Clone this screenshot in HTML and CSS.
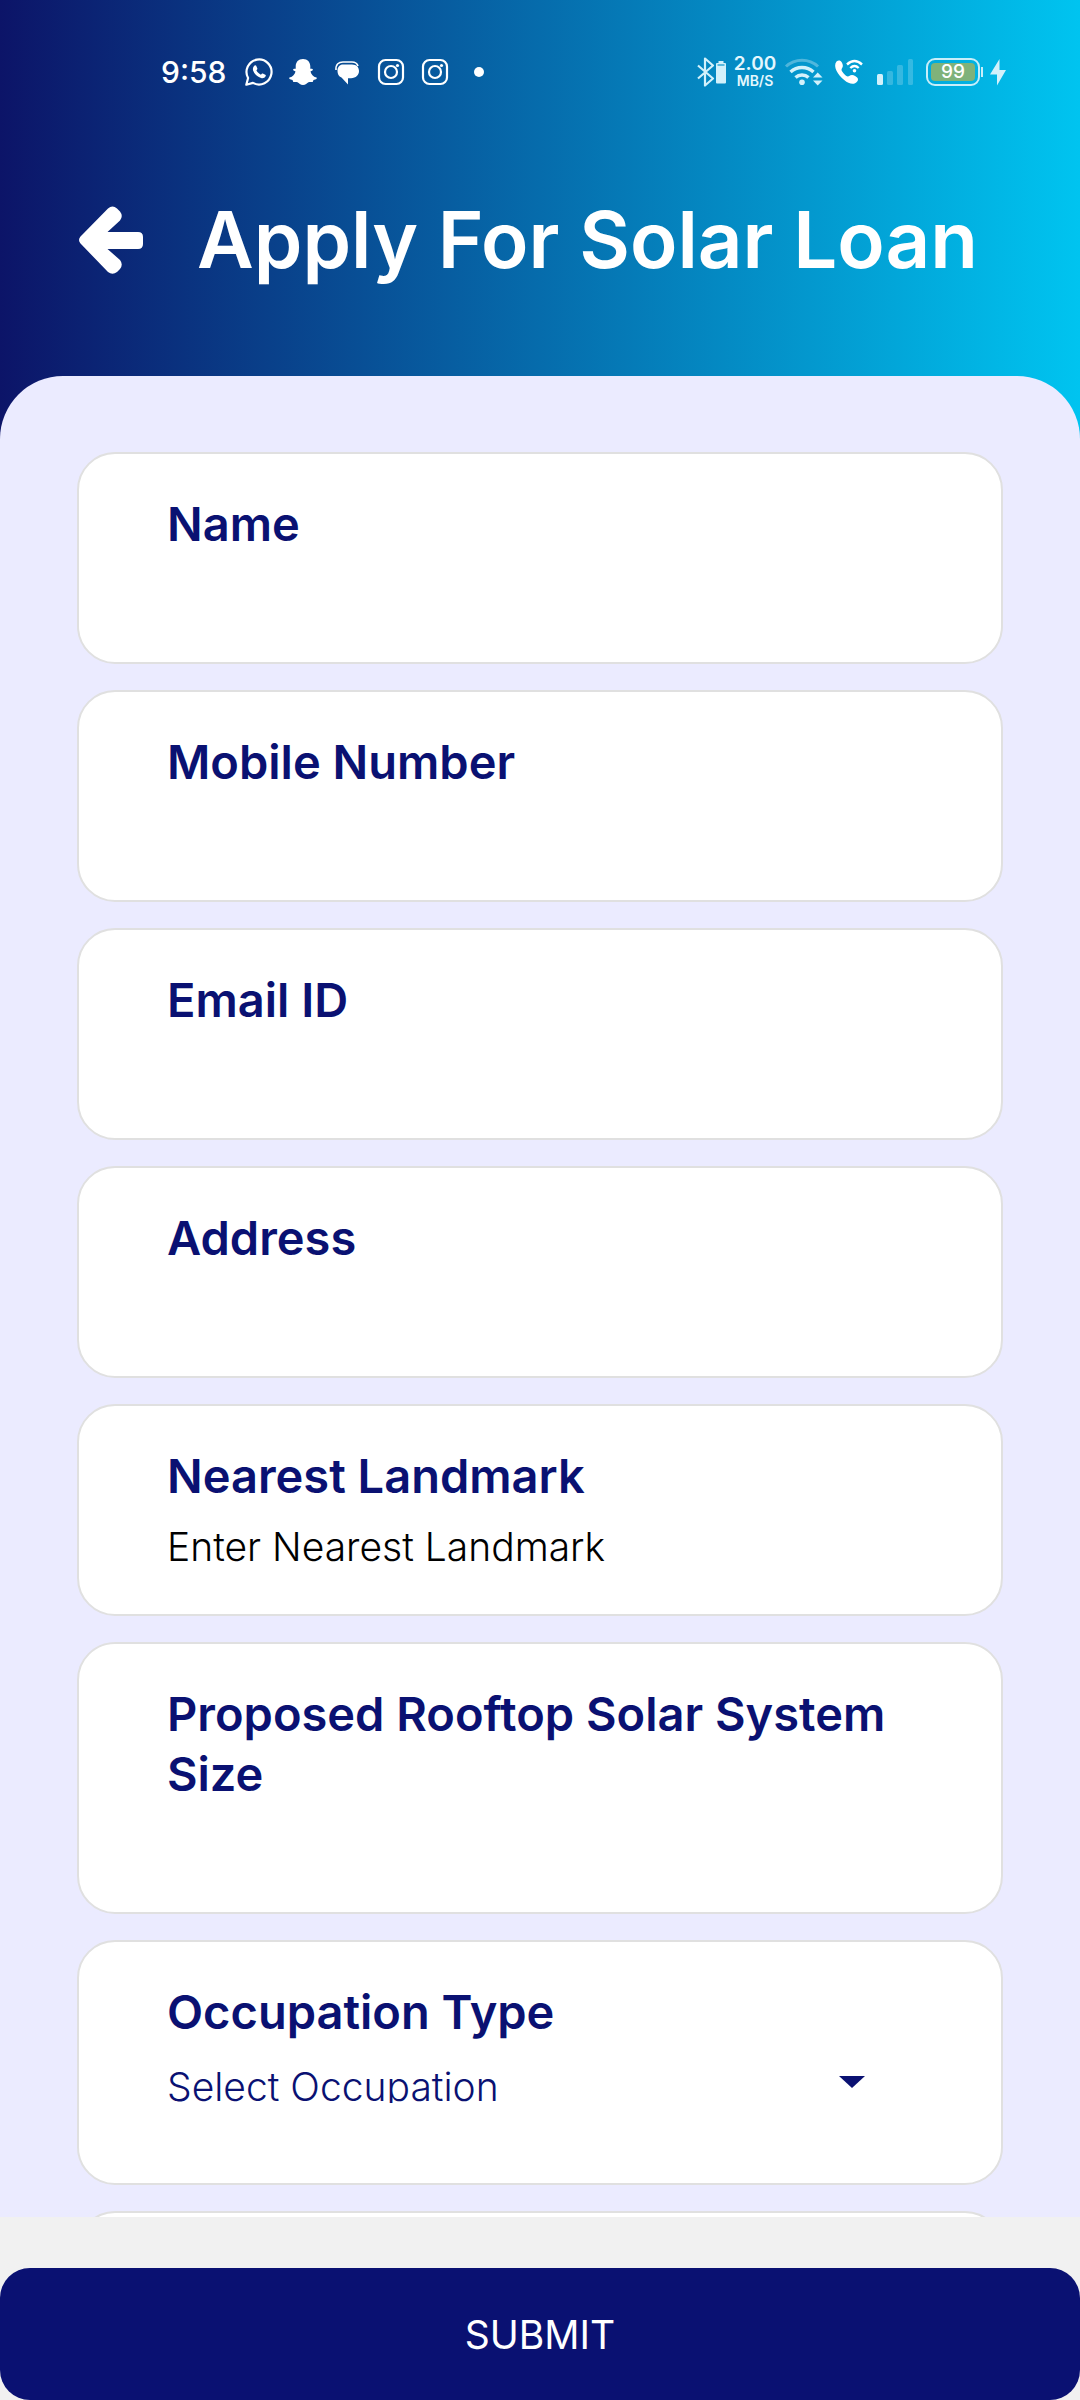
FILE: index.html
```html
<!DOCTYPE html>
<html lang="en">
<head>
<meta charset="utf-8">
<meta name="viewport" content="width=device-width, initial-scale=1">
<title>Apply For Solar Loan</title>
<link rel="stylesheet" href="styles.css">
</head>
<body>
<div class="app">
  <header class="top">
    <div class="status">
      <div class="status-left">
        <span class="clock">9:58</span>
        <svg width="30" height="30" viewBox="0 0 30 30" fill="none" stroke="#fff" stroke-width="2.2"><path d="M2.3 27.7l1.8-6.7A12.5 12.5 0 1 1 9 25.9z" stroke-linejoin="round"/><path d="M10.6 8.6c.5-.5 1.300-.5 1.600.2l1.100 2.500c.2.5 0 1-.900 2 1 2 2.400 3.400 4.500 4.400.9-1.100 1.400-1.400 1.900-1.200l2.500 1.200c.6.3.6.9.3 1.600-.7 1.600-2.700 2.200-4.500 1.700-4-1.200-6.800-4-8-7.500-.5-1.700 0-3.700 1.500-4.900z" fill="#fff" stroke="none"/></svg>
        <svg width="30" height="30" viewBox="0 0 30 30" fill="#fff"><path d="M15 2c4.600 0 7.300 3.200 7.300 7.300v2.500c1-.3 2.600-.3 2.600.8 0 1-1.500 1.400-2.400 2 .6 3 2.700 5.200 5.900 6 .8.300.5 1.300-.4 1.700l-2.500.8-.8 1.800c-1.300.2-2.900-.2-4.200.4-1.600.8-2.900 2.700-5.500 2.700s-3.900-1.900-5.500-2.700c-1.300-.6-2.900-.2-4.200-.4L4.500 23.100 2 22.300c-.9-.4-1.200-1.400-.4-1.700 3.200-.8 5.300-3 5.900-6-.9-.6-2.400-1-2.400-2 0-1.100 1.600-1.100 2.600-.8V9.300C7.700 5.200 10.400 2 15 2z"/></svg>
        <svg width="30" height="30" viewBox="0 0 30 30"><path d="M4 13C3.500 7 7 5 11 5h9c3 0 5 1 6 4" fill="none" stroke="#fff" stroke-width="1.600"/><path d="M11 7.500h9c4.500 0 7 2.800 7 6.500 0 4-3 7-8 7.200l-3 0V27.500L9.500 20.600C6.700 19.300 5.500 17 5.500 14c0-4 2.200-6.500 5.500-6.500z" fill="#fff"/></svg>
        <svg width="30" height="30" viewBox="0 0 30 30" fill="none" stroke="#fff" stroke-width="2.200"><rect x="3" y="3" width="24" height="24" rx="6.500"/><circle cx="15" cy="15" r="6"/><circle cx="21.500" cy="8.500" r="1.600" fill="#fff" stroke="none"/></svg>
        <svg width="30" height="30" viewBox="0 0 30 30" fill="none" stroke="#fff" stroke-width="2.200"><rect x="3" y="3" width="24" height="24" rx="6.500"/><circle cx="15" cy="15" r="6"/><circle cx="21.500" cy="8.500" r="1.600" fill="#fff" stroke="none"/></svg>
        <svg width="30" height="30" viewBox="0 0 30 30" fill="#fff"><circle cx="15" cy="15" r="5"/></svg>
      </div>
      <div class="status-right">
        <svg width="30" height="30" viewBox="0 0 30 30"><path d="M2 8.500l15 13-8 7V1.500l8 7-15 13" fill="none" stroke="#d2f1fb" stroke-width="2.200" stroke-linejoin="round"/><path d="M22.500 4h5v2H29q1 0 1 1v18.500q0 1-1 1h-8q-1 0-1-1V7q0-1 1-1h1.500z" fill="#d2f1fb"/><path d="M21.500 8h7" stroke="#0a96cc" stroke-width="1.200"/></svg>
        <span class="speed"><span class="speed-value">2.00</span><span class="speed-unit">MB/S</span></span>
        <svg width="40" height="30" viewBox="0 0 40 30" fill="none"><path d="M2 9.500a23.500 23.500 0 0 1 32 0" stroke="#fff" stroke-opacity=".3" stroke-width="3"/><path d="M6.500 15a17 17 0 0 1 23 0M11.500 20.500a9.500 9.500 0 0 1 13 0" stroke="#d2f1fb" stroke-width="3.400"/><circle cx="18" cy="25.300" r="2.800" fill="#d2f1fb"/><path d="M29 20.500h9.500L33.700 15.500zM29 23.500h9.500l-4.800 5z" fill="#d2f1fb"/></svg>
        <svg width="34" height="30" viewBox="0 0 34 30" fill="none"><path d="M4.500 4.500C6.500 3 8.500 3.300 9.700 5.300c1.500 2.700 1.500 4.500.3 6-1 1.300-.5 2.800 1.700 5.200 2.300 2.600 4 3.500 5.500 2.500 1.900-1.300 3.800-1.300 6.300.2 2.800 1.600 3.200 3.500 1.700 5.300-2.800 3.600-8 2.800-13-1.500C6 18 .5 9.500 4.500 4.500z" fill="#fff"/><path d="M15 7.500q7.500-6.800 15 0M18.300 11q4.200-4 8.400 0" stroke="#fff" stroke-width="2.400"/><circle cx="22.500" cy="13.800" r="1.800" fill="#fff"/></svg>
        <svg width="40" height="30" viewBox="0 0 40 30" fill="#fff"><rect x="3" y="17" width="6" height="11" rx="1.500" fill="#d2f1fb"/><g opacity=".2"><rect x="13" y="14" width="6" height="14" rx="1.500"/><rect x="23" y="8" width="6" height="20" rx="1.500"/><rect x="34" y="2" width="5" height="26" rx="1.500"/></g></svg>
        <span class="battery"><span class="battery-level">99</span></span>
        <svg width="18" height="30" viewBox="0 0 18 30" fill="#d2f1fb"><path d="M11.500 2v11H18L9 28.500V17.500H2z"/></svg>
      </div>
    </div>
    <div class="title-row">
      <button class="back" type="button" aria-label="Back">
        <svg width="64" height="68" viewBox="0 0 64 68" fill="#fff"><path d="M1.500 30.500L29 2.500Q33.500-1.500 38 2.500L41 5.500Q44.500 10 41 14.500L28.500 26H59Q64 26 64 31V38Q64 43 59 43H28.500L41 54Q44.500 58.500 41 63L38 66Q33.500 69.500 29 66L1.500 37.500Q-1.500 34 1.500 30.500z"/></svg>
      </button>
      <h1 class="title">Apply For Solar Loan</h1>
    </div>
  </header>
  <form class="panel" id="loan-form">
    <div class="card">
      <label class="label" for="name">Name</label>
      <input class="field" id="name" type="text">
    </div>
    <div class="card">
      <label class="label" for="mobile">Mobile Number</label>
      <input class="field" id="mobile" type="tel">
    </div>
    <div class="card">
      <label class="label" for="email">Email ID</label>
      <input class="field" id="email" type="email">
    </div>
    <div class="card">
      <label class="label" for="address">Address</label>
      <input class="field" id="address" type="text">
    </div>
    <div class="card">
      <label class="label" for="landmark">Nearest Landmark</label>
      <input class="field" id="landmark" type="text" placeholder="Enter Nearest Landmark">
    </div>
    <div class="card">
      <label class="label" for="size">Proposed Rooftop Solar System Size</label>
      <input class="field" id="size" type="text">
    </div>
    <div class="card card-select">
      <label class="label" for="occupation">Occupation Type</label>
      <div class="select-wrap">
        <select class="select" id="occupation"><option>Select Occupation</option></select>
        <svg class="caret" width="26" height="12" viewBox="0 0 26 12" fill="#0a1172" aria-hidden="true"><path d="M0 0h26L13 12z"/></svg>
      </div>
    </div>
    <div class="card card-next"></div>
  </form>
  <footer class="bottom">
    <button class="submit" type="submit" form="loan-form">SUBMIT</button>
  </footer>
</div>
</body>
</html>
```
FILE: styles.css
```css
* {
  box-sizing: border-box;
}

body {
  margin: 0;
  font-family: Inter, "Liberation Sans", sans-serif;
}

svg {
  display: block;
  flex: none;
}

.app {
  display: flex;
  flex-direction: column;
  height: 100vh;
  background: linear-gradient(90deg, #0c1468, #00c4f0);
}

.top {
  flex: none;
  color: #fff;
}

.status {
  display: flex;
  justify-content: space-between;
  align-items: center;
  height: 144px;
  padding: 0 74px 0 161px;
}

.status-left {
  display: flex;
  align-items: center;
  gap: 14px;
}

.status-right {
  display: flex;
  align-items: center;
  gap: 8px;
}

.clock {
  width: 69px;
  font-size: 30px;
  font-weight: 500;
}

.speed {
  display: flex;
  flex-direction: column;
  align-items: center;
  width: 42px;
  font-weight: 600;
  color: #e4f7fd;
}

.speed-value {
  font-size: 19px;
  line-height: 18px;
}

.speed-unit {
  font-size: 14px;
  line-height: 16px;
}

.battery {
  position: relative;
  width: 54px;
  height: 28px;
  margin-left: 4px;
  padding: 3px;
  border: 2px solid #c8eefa;
  border-radius: 9px;
}

.battery::after {
  content: "";
  position: absolute;
  left: 53px;
  top: 7px;
  width: 2px;
  height: 10px;
  background: #c8eefa;
}

.battery-level {
  display: block;
  border-radius: 4px;
  background: #7fb27a;
  font-size: 19px;
  font-weight: 500;
  line-height: 18px;
  text-align: center;
}

.title-row {
  display: flex;
  align-items: center;
  gap: 54px;
  height: 232px;
  padding: 0 79px 40px;
}

.back {
  flex: none;
  padding: 0;
  border: 0;
  background: none;
}

.title {
  margin: 0;
  font-size: 78px;
  font-weight: 600;
  line-height: 96px;
  white-space: nowrap;
}

.panel {
  display: flex;
  flex: 1;
  flex-direction: column;
  gap: 26px;
  min-height: 0;
  padding: 76px 77px 26px;
  border-radius: 63px 63px 0 0;
  background: #ebebff;
  overflow-y: auto;
  scrollbar-width: none;
}

.card {
  display: flex;
  flex: none;
  flex-direction: column;
  gap: 10px;
  padding: 40px 88px 38px;
  border: 2px solid #e0e0e0;
  border-radius: 38px;
  background: #fff;
}

.card-select {
  padding-bottom: 80px;
}

.card-next {
  height: 212px;
}

.label {
  font-size: 47px;
  font-weight: 600;
  line-height: 60px;
  color: #0a1172;
}

.field {
  width: 100%;
  height: 60px;
  padding: 0;
  border: 0;
  outline: 0;
  background: none;
  font-family: inherit;
  font-size: 39px;
  font-weight: 300;
  color: #000;
}

.field::placeholder {
  color: #000;
  opacity: 1;
}

.select-wrap {
  display: flex;
  align-items: flex-start;
  height: 51px;
  padding-right: 48px;
  overflow: hidden;
}

.select {
  flex: 1;
  height: 68px;
  padding: 0;
  border: 0;
  appearance: none;
  background: none;
  font-family: inherit;
  font-size: 39px;
  font-weight: 300;
  color: #0a1172;
}

.caret {
  margin-top: 24px;
}

.bottom {
  flex: none;
  padding-top: 51px;
  background: #f1f1f1;
}

.submit {
  display: block;
  width: 100%;
  height: 132px;
  border: 0;
  border-radius: 30px;
  background: #0a1172;
  font-family: inherit;
  font-size: 39px;
  font-weight: 400;
  color: #fff;
}
```
